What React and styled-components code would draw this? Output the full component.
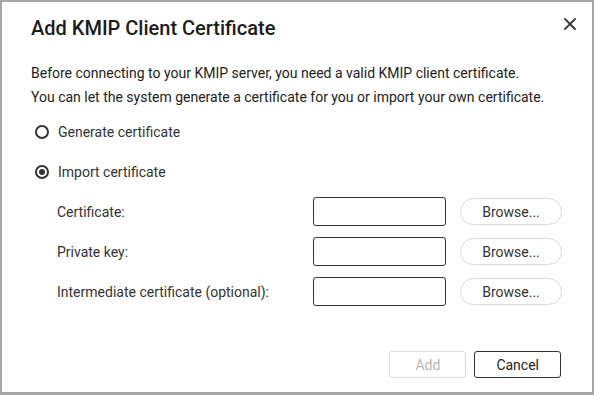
import React, { useState } from "react";
import styled, { createGlobalStyle } from "styled-components";

const GlobalStyle = createGlobalStyle`
  html, body {
    margin: 0;
    padding: 0;
    background: #ffffff;
  }
  * {
    box-sizing: border-box;
  }
`;

const rows = [
  { id: "cert", label: "Certificate:" },
  { id: "key", label: "Private key:" },
  { id: "inter", label: "Intermediate certificate (optional):" },
];

function App() {
  const [mode, setMode] = useState("import");

  return (
    <>
      <GlobalStyle />
      <Dialog>
        <Header>
          <Title>Add KMIP Client Certificate</Title>
          <CloseBtn aria-label="Close">
            <svg width="12" height="12" viewBox="0 0 12 12">
              <path
                d="M1 1 L11 11 M11 1 L1 11"
                stroke="#333"
                strokeWidth="1.8"
                strokeLinecap="square"
              />
            </svg>
          </CloseBtn>
        </Header>
        <Body>
          <Intro>
            <p>
              Before connecting to your KMIP server, you need a valid KMIP
              client certificate.
            </p>
            <p>
              You can let the system generate a certificate for you or import
              your own certificate.
            </p>
          </Intro>
          <RadioRow onClick={() => setMode("generate")}>
            <Radio $checked={mode === "generate"} />
            Generate certificate
          </RadioRow>
          <RadioRow $gapTop onClick={() => setMode("import")}>
            <Radio $checked={mode === "import"} />
            Import certificate
          </RadioRow>
          <FileList>
            {rows.map((row) => (
              <FileRow key={row.id}>
                <FileLabel>{row.label}</FileLabel>
                <FileInput type="text" disabled={mode !== "import"} />
                <BrowseBtn>Browse...</BrowseBtn>
              </FileRow>
            ))}
          </FileList>
        </Body>
        <Footer>
          <ActionBtn disabled>Add</ActionBtn>
          <ActionBtn>Cancel</ActionBtn>
        </Footer>
      </Dialog>
    </>
  );
}

const Dialog = styled.div`
  width: 594px;
  height: 395px;
  border: 2px solid #a6a6a6;
  border-bottom-width: 3px;
  background: #fff;
  display: flex;
  flex-direction: column;
  font-family: Roboto, "Liberation Sans", Arial, sans-serif;
  color: #333;
`;

const Header = styled.div`
  display: flex;
  align-items: flex-start;
  justify-content: space-between;
  padding: 14px 14px 0 29px;
`;

const Title = styled.h1`
  margin: 0;
  font-size: 20px;
  line-height: 24px;
  font-weight: 500;
  color: #1c1c1c;
`;

const CloseBtn = styled.button`
  border: none;
  background: none;
  padding: 0;
  width: 16px;
  height: 16px;
  display: flex;
  align-items: center;
  justify-content: center;
  cursor: pointer;
`;

const Body = styled.div`
  padding: 21px 29px 0 29px;
  display: flex;
  flex-direction: column;
`;

const Intro = styled.div`
  p {
    margin: 0;
    font-size: 14px;
    line-height: 24px;
    color: #222;
  }
`;

const RadioRow = styled.label`
  display: flex;
  align-items: center;
  gap: 9px;
  height: 24px;
  margin-top: ${(p) => (p.$gapTop ? "16px" : "11px")};
  padding-left: 4px;
  font-size: 14px;
  color: #333;
  cursor: pointer;
`;

const Radio = styled.span`
  width: 14px;
  height: 14px;
  border-radius: 50%;
  border: 2px solid #333;
  display: flex;
  align-items: center;
  justify-content: center;

  &::after {
    content: "";
    width: 6px;
    height: 6px;
    border-radius: 50%;
    background: #333;
    display: ${(p) => (p.$checked ? "block" : "none")};
  }
`;

const FileList = styled.div`
  display: flex;
  flex-direction: column;
  gap: 11px;
  margin-top: 13px;
  padding-left: 26px;
`;

const FileRow = styled.div`
  display: flex;
  align-items: center;
  height: 29px;
`;

const FileLabel = styled.span`
  width: 256px;
  font-size: 14px;
  color: #333;
`;

const FileInput = styled.input`
  width: 133px;
  height: 29px;
  border: 1px solid #333;
  border-radius: 3px;
  background: #fff;
  margin: 0 14px 0 0;
  padding: 0 6px;
  font: inherit;
`;

const BrowseBtn = styled.button`
  width: 102px;
  height: 27px;
  border: 1px solid #d9d9d9;
  border-radius: 14px;
  background: #fff;
  font-family: inherit;
  font-size: 14px;
  color: #333;
  cursor: pointer;
  padding: 0;
`;

const Footer = styled.div`
  margin-top: auto;
  display: flex;
  justify-content: flex-end;
  gap: 8px;
  padding: 0 31px 14px 0;
`;

const ActionBtn = styled.button`
  min-width: 77px;
  height: 27px;
  padding: 0 21px;
  border: 1px solid #333;
  border-radius: 3px;
  background: #fff;
  font-family: inherit;
  font-size: 14px;
  color: #222;
  cursor: pointer;

  &:disabled {
    border-color: #dcdcdc;
    color: #b5b5b5;
    cursor: default;
  }
`;

export default App;
